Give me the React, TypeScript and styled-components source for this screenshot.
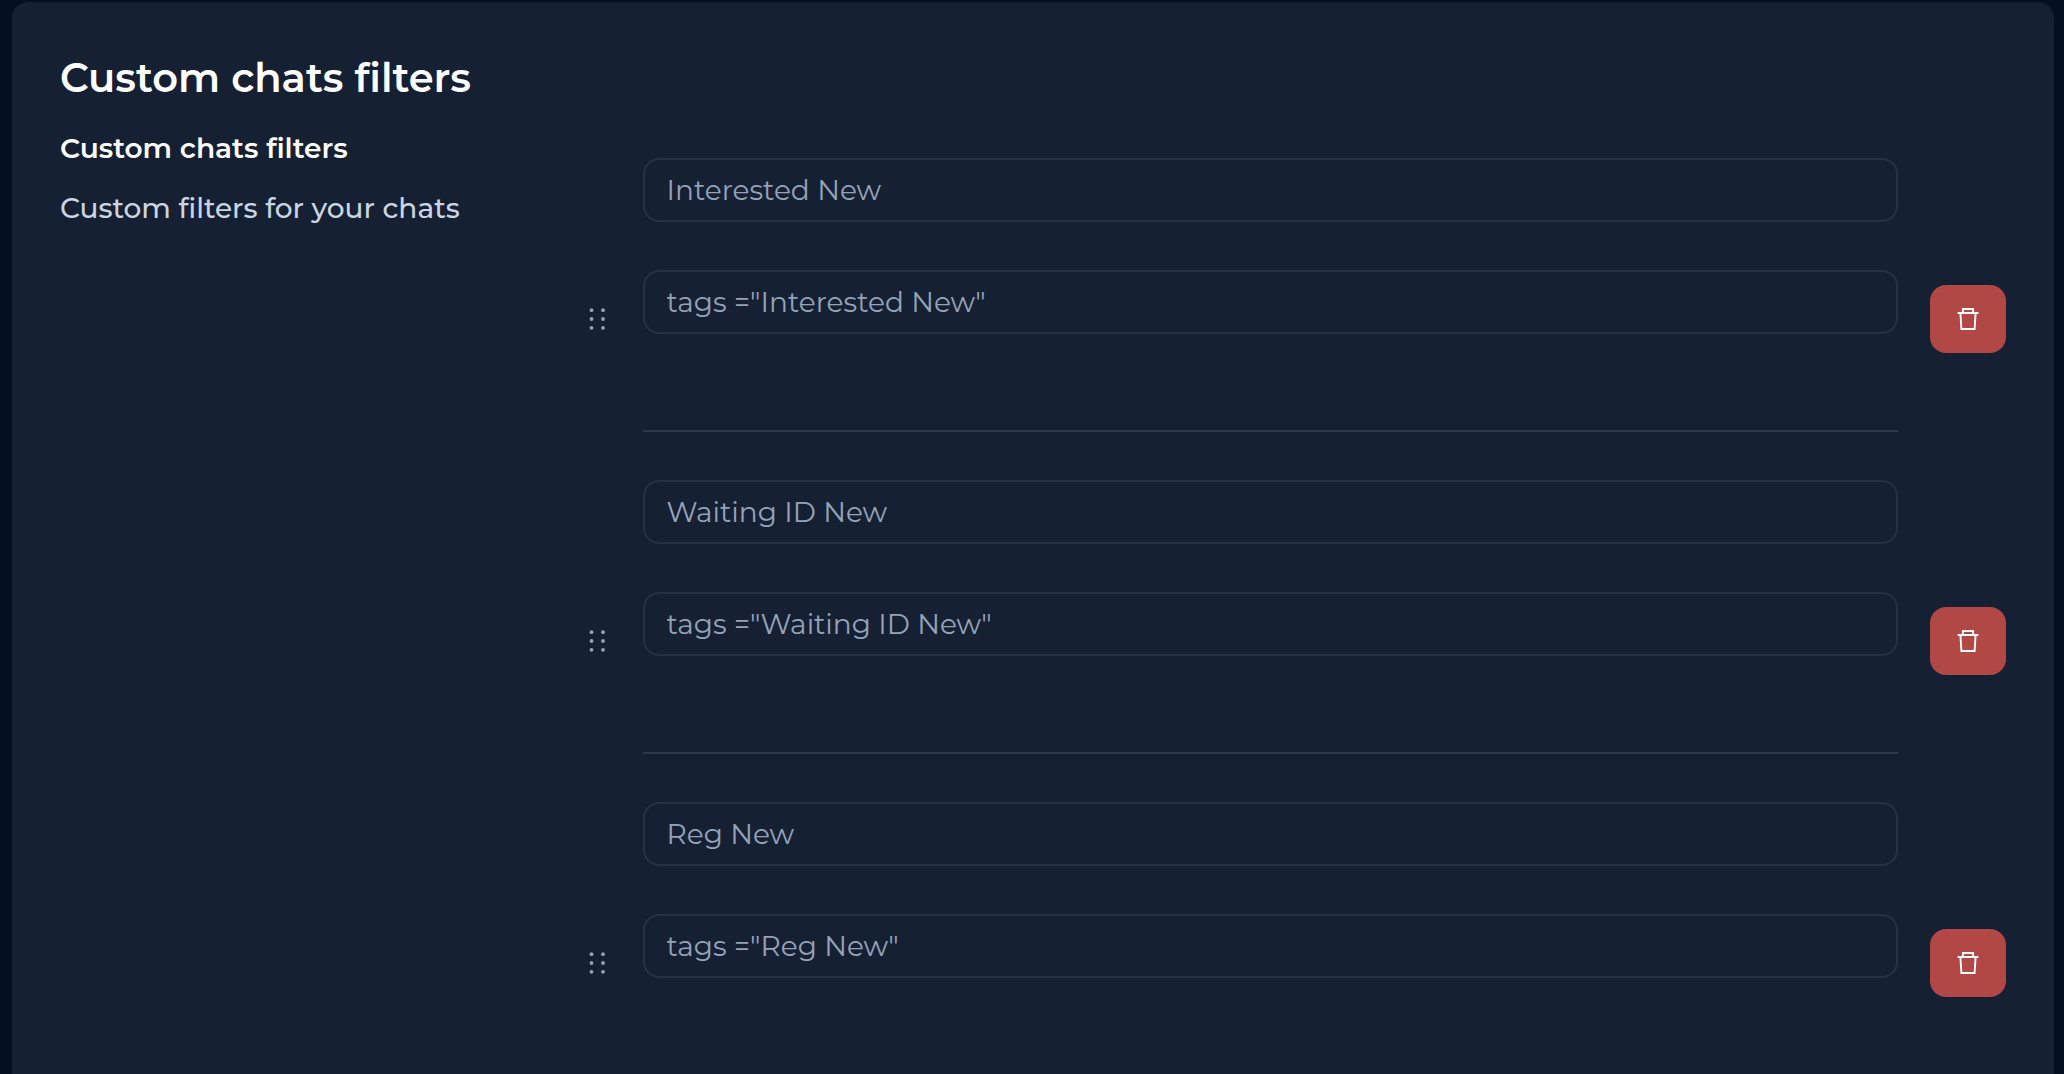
import React, { useState } from "react";
import styled, { createGlobalStyle } from "styled-components";

const GlobalStyle = createGlobalStyle`
  *, *::before, *::after { box-sizing: border-box; }
  body {
    margin: 0;
    background: #040f1f;
    font-family: Montserrat, Inter, "Liberation Sans", sans-serif;
  }
`;

const Page = styled.main`
  height: 100vh;
  overflow-y: auto;
  scrollbar-width: none;
  padding: 2px 10px 0 12px;
`;

const Panel = styled.section`
  padding: 48px;
  border-radius: 16px;
  background: #162033;
`;

const Title = styled.h1`
  margin: 0;
  color: #ffffff;
  font-size: 40px;
  font-weight: 600;
  line-height: 56px;
`;

const Columns = styled.div`
  display: grid;
  grid-template-columns: minmax(0, 1fr) minmax(0, 3fr);
  gap: 48px;
  margin-top: 22px;
`;

const Intro = styled.div`
  display: flex;
  flex-direction: column;
  gap: 20px;
`;

const Subtitle = styled.h2`
  margin: 0;
  color: #ffffff;
  font-size: 28px;
  font-weight: 600;
  line-height: 40px;
`;

const Description = styled.p`
  margin: 0;
  color: #cbd5e1;
  font-size: 28px;
  font-weight: 500;
  line-height: 40px;
  white-space: nowrap;
`;

const FilterList = styled.ul`
  margin: 0;
  padding: 30px 0 0;
  list-style: none;
`;

const FilterRow = styled.li`
  display: flex;
  align-items: center;
  gap: 32px;
`;

const Fields = styled.div`
  display: flex;
  flex: 1;
  flex-direction: column;
  gap: 48px;
  min-width: 0;
`;

const Field = styled.input`
  width: 100%;
  height: 64px;
  padding: 0 22px;
  border: 2px solid #26323f;
  border-radius: 16px;
  outline: none;
  background: transparent;
  color: #94a3b8;
  font-family: inherit;
  font-size: 28px;
  font-weight: 400;

  &:focus { border-color: #475569; }
`;

const Divider = styled.hr`
  width: 100%;
  height: 2px;
  margin: 48px 0;
  border: 0;
  background: #2d394b;
`;

const GripButton = styled.button`
  display: flex;
  padding: 0;
  border: 0;
  background: none;
  color: #94a3b8;
  cursor: grab;
`;

const DeleteButton = styled.button`
  display: flex;
  align-items: center;
  justify-content: center;
  width: 76px;
  height: 68px;
  padding: 0;
  border: 0;
  border-radius: 16px;
  background: #b14845;
  color: #ffffff;
  cursor: pointer;
`;

const GripIcon = () => (
  <svg width="28" height="28" viewBox="0 0 28 28" fill="currentColor" aria-hidden="true">
    {[5.2, 14, 22.8].map((y) => (
      <React.Fragment key={y}>
        <circle cx="8.5" cy={y} r="1.9" />
        <circle cx="20" cy={y} r="1.9" />
      </React.Fragment>
    ))}
  </svg>
);

const TrashIcon = () => (
  <svg width="24" height="24" viewBox="0 0 24 24" fill="none" stroke="currentColor" strokeWidth="1.9" aria-hidden="true">
    <path d="M1.6 6h20.8M4.4 6l1 16h13.2l1-16M6.9 6V2h10.2v4" />
  </svg>
);

const savedFilters = [
  { id: 1, name: "Interested New", query: 'tags ="Interested New"' },
  { id: 2, name: "Waiting ID New", query: 'tags ="Waiting ID New"' },
  { id: 3, name: "Reg New", query: 'tags ="Reg New"' },
];

export default function App() {
  const [filters, setFilters] = useState(savedFilters);

  const update = (id: number, key: "name" | "query", value: string) =>
    setFilters((all) => all.map((f) => (f.id === id ? { ...f, [key]: value } : f)));
  const remove = (id: number) => setFilters((all) => all.filter((f) => f.id !== id));

  return (
    <>
      <GlobalStyle />
      <Page>
        <Panel>
          <Title>Custom chats filters</Title>
          <Columns>
            <Intro>
              <Subtitle>Custom chats filters</Subtitle>
              <Description>Custom filters for your chats</Description>
            </Intro>
            <FilterList>
              {filters.map(({ id, name, query }) => (
                <FilterRow key={id}>
                  <GripButton type="button" aria-label="Reorder filter">
                    <GripIcon />
                  </GripButton>
                  <Fields>
                    <Field aria-label="Filter name" value={name} onChange={(e) => update(id, "name", e.target.value)} />
                    <Field aria-label="Filter query" value={query} onChange={(e) => update(id, "query", e.target.value)} />
                    <Divider />
                  </Fields>
                  <DeleteButton type="button" aria-label="Delete filter" onClick={() => remove(id)}>
                    <TrashIcon />
                  </DeleteButton>
                </FilterRow>
              ))}
            </FilterList>
          </Columns>
        </Panel>
      </Page>
    </>
  );
}
